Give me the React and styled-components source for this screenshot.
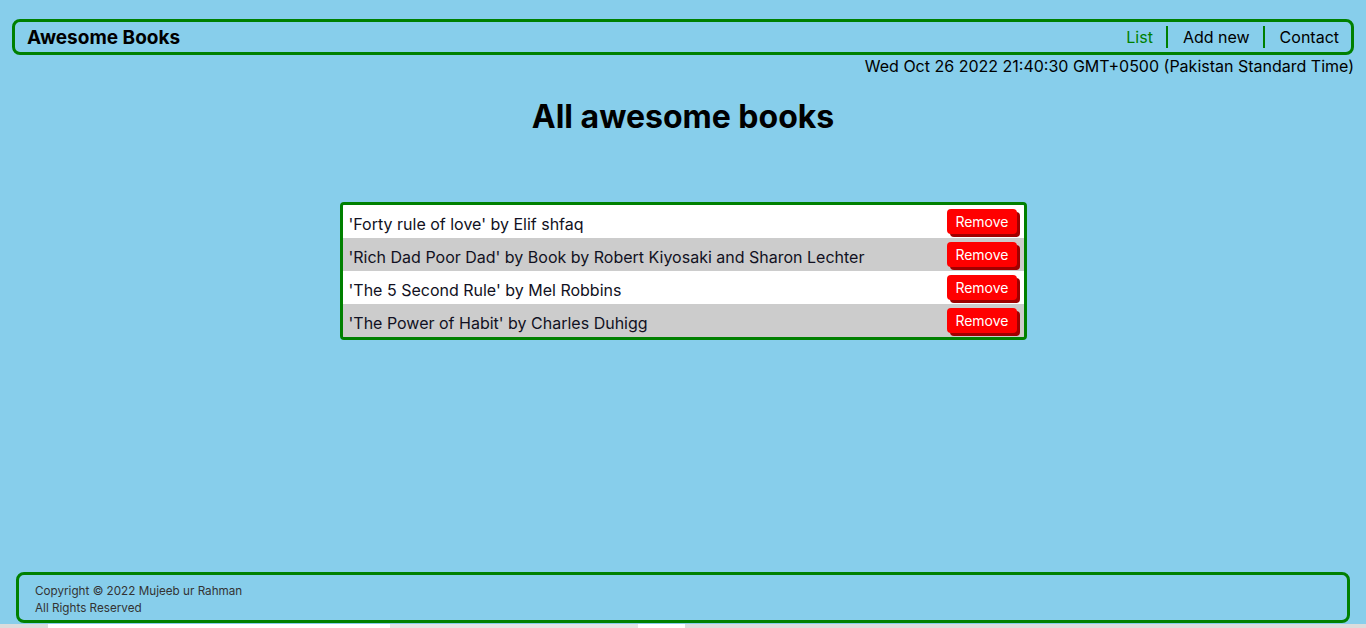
import React from "react";
import styled, { createGlobalStyle } from "styled-components";

const Global = createGlobalStyle`
  html, body { margin: 0; padding: 0; }
  body {
    background: #87ceeb;
    font-family: Inter, "Noto Sans", sans-serif;
    color: #000;
    overflow: hidden;
  }
`;

const Page = styled.div`
  display: flex;
  flex-direction: column;
  height: 628px;
  padding: 19px 12px 0 12px;
  box-sizing: border-box;
`;

const Header = styled.header`
  display: flex;
  align-items: center;
  justify-content: space-between;
  height: 36px;
  box-sizing: border-box;
  border: 3px solid #008000;
  border-radius: 8px;
  padding: 0 12px;
`;

const Brand = styled.h1`
  margin: 0;
  font-size: 19px;
  font-weight: 700;
`;

const Nav = styled.nav`
  display: flex;
  align-items: center;
  margin-top: -1px;
`;

const NavLink = styled.a`
  font-size: 16px;
  color: ${(p) => (p.$active ? "#008000" : "#000")};
  padding: 0 13px 0 15px;
  line-height: 22px;
  text-decoration: none;
  border-left: ${(p) => (p.$first ? "none" : "2px solid #008000")};
  &:first-child { padding-left: 0; }
  &:last-child { padding-right: 0; }
`;

const DateLine = styled.p`
  margin: 1px 0 0;
  text-align: right;
  font-size: 16px;
  line-height: 20px;
`;

const Title = styled.h2`
  margin: 21px 0 0;
  text-align: center;
  font-size: 32px;
  font-weight: 700;
  line-height: 40px;
`;

const List = styled.ul`
  list-style: none;
  margin: 65px auto 0;
  padding: 0;
  width: 687px;
  box-sizing: border-box;
  border: 3px solid #008000;
  border-radius: 4px;
  overflow: hidden;
`;

const Row = styled.li`
  display: flex;
  align-items: center;
  justify-content: space-between;
  height: 33px;
  box-sizing: border-box;
  padding: 5px 7px 0 6px;
  background: ${(p) => (p.$alt ? "#cccccc" : "#ffffff")};
  font-size: 16px;
  color: #111122;
`;

const RemoveBtn = styled.button`
  font-family: Inter, "Noto Sans", sans-serif;
  background: #ff0000;
  color: #fff;
  border: none;
  border-radius: 4px;
  font-size: 14px;
  height: 25px;
  padding: 0 8px;
  box-shadow: 3px 3px 0 #a00000;
  margin-top: -6px;
`;

const Spacer = styled.div`
  flex: 1;
`;

const Footer = styled.footer`
  margin: 0 4px;
  height: 51px;
  box-sizing: border-box;
  border: 3px solid #008000;
  border-radius: 8px;
  padding: 8px 16px 0;
  font-size: 11.7px;
  line-height: 17px;
  color: #333;
`;

const Strip = styled.div`
  display: flex;
  height: 4px;
  margin: 1px -12px 0;
  background: #dcdcdc;
`;

const StripBlock = styled.div`
  width: ${(p) => p.$w}px;
  margin-left: ${(p) => p.$ml}px;
  background: ${(p) => p.$bg};
`;

const books = [
  "'Forty rule of love' by Elif shfaq",
  "'Rich Dad Poor Dad' by Book by Robert Kiyosaki and Sharon Lechter",
  "'The 5 Second Rule' by Mel Robbins",
  "'The Power of Habit' by Charles Duhigg",
];

export default function App() {
  return (
    <>
      <Global />
      <Page>
        <Header>
          <Brand>Awesome Books</Brand>
          <Nav>
            <NavLink $first $active href="#">List</NavLink>
            <NavLink href="#">Add new</NavLink>
            <NavLink href="#">Contact</NavLink>
          </Nav>
        </Header>
        <DateLine>Wed Oct 26 2022 21:40:30 GMT+0500 (Pakistan Standard Time)</DateLine>
        <Title>All awesome books</Title>
        <List>
          {books.map((b, i) => (
            <Row key={i} $alt={i % 2 === 1}>
              <span>{b}</span>
              <RemoveBtn>Remove</RemoveBtn>
            </Row>
          ))}
        </List>
        <Spacer />
        <Footer>
          Copyright © 2022 Mujeeb ur Rahman
          <br />
          All Rights Reserved
        </Footer>
        <Strip>
          <StripBlock $ml={48} $w={342} $bg="#ffffff" />
          <StripBlock $ml={0} $w={248} $bg="#e4e4e4" />
          <StripBlock $ml={0} $w={47} $bg="#ffffff" />
        </Strip>
      </Page>
    </>
  );
}
